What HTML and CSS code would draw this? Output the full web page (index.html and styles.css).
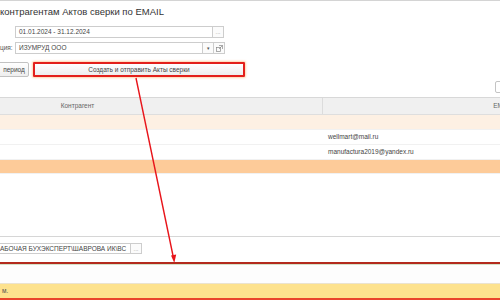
FILE: index.html
```html
<!DOCTYPE html>
<html lang="ru">
<head>
    <meta charset="UTF-8">
    <title>Отправка контрагентам Актов сверки по EMAIL</title>
    <link rel="stylesheet" href="styles.css">
</head>
<body>
    <div class="window">
        <h1 class="title">контрагентам Актов сверки по EMAIL</h1>

        <div class="field-row">
            <span class="label"></span>
            <div class="input date">01.01.2024 - 31.12.2024</div>
            <span class="btn-mini">...</span>
        </div>

        <div class="field-row">
            <span class="label">ция:</span>
            <div class="input org">ИЗУМРУД ООО</div>
            <span class="btn-mini dark">▾</span>
            <span class="btn-mini">
                <svg width="7" height="7" viewBox="0 0 7 7">
                    <rect x="0.5" y="2.5" width="4" height="4" fill="none" stroke="#888" stroke-width="0.7"/>
                    <path d="M3 0.5h3.5v3.5M6.5 0.5L3 4" fill="none" stroke="#888" stroke-width="0.7"/>
                </svg>
            </span>
        </div>

        <div class="actions">
            <button class="btn period">период</button>
            <button class="btn send">Создать и отправить Акты сверки</button>
        </div>

        <div class="table-tools">
            <span class="tool-btn"></span>
        </div>

        <div class="grid">
            <div class="grid-head">
                <div class="col-name">Контрагент</div>
                <div class="col-mail">EMAIL</div>
            </div>
            <div class="grid-row peach">
                <div class="col-name"></div>
                <div class="col-mail"></div>
            </div>
            <div class="grid-row">
                <div class="col-name"></div>
                <div class="col-mail">wellmart@mail.ru</div>
            </div>
            <div class="grid-row">
                <div class="col-name"></div>
                <div class="col-mail">manufactura2019@yandex.ru</div>
            </div>
            <div class="grid-row selected">
                <div class="col-name"></div>
                <div class="col-mail"></div>
            </div>
        </div>

        <div class="footer-field">
            <div class="input user">АБОЧАЯ БУХЭКСПЕРТ\ШАВРОВА ИК\ВС</div>
            <span class="btn-mini">...</span>
        </div>

        <div class="message-box">
            <div class="msg-blank"></div>
            <div class="msg-bar">м.</div>
        </div>
    </div>

    <svg class="arrow" width="500" height="300" viewBox="0 0 500 300">
        <line x1="136" y1="78" x2="173.5" y2="258" stroke="#e8141a" stroke-width="1.4"/>
        <path d="M174.3 263 L171 255.5 L176.2 254.6 Z" fill="#e8141a"/>
    </svg>
</body>
</html>
```

FILE: styles.css
```css
* {
    margin: 0;
    padding: 0;
    box-sizing: border-box;
    font-family: 'Liberation Sans', Arial, sans-serif;
}

body {
    width: 500px;
    height: 300px;
    overflow: hidden;
    background: white;
    color: #4a4a4a;
    position: relative;
}

.window {
    height: 300px;
    display: flex;
    flex-direction: column;
    border-top: 1px solid #d4d4d4;
}

.title {
    height: 25px;
    padding-top: 4px;
    font-size: 9.5px;
    line-height: 14px;
    font-weight: normal;
    color: #333;
}

.field-row {
    display: flex;
    height: 12px;
    margin-bottom: 4px;
}

.label {
    width: 15px;
    font-size: 6.5px;
    line-height: 12px;
    color: #555;
}

.input {
    height: 12px;
    border: 1px solid #cdcdcd;
    background: white;
    font-size: 6.5px;
    line-height: 10px;
    padding-left: 3px;
    color: #444;
}

.date {
    width: 198px;
}

.org {
    width: 188px;
}

.btn-mini {
    width: 11px;
    height: 12px;
    border: 1px solid #cdcdcd;
    border-left: none;
    display: flex;
    align-items: center;
    justify-content: center;
    font-size: 6px;
    color: #999;
    background: #fbfbfb;
}

.btn-mini.dark {
    color: #555;
    font-size: 5px;
}

.actions {
    display: flex;
    margin-top: 4px;
    height: 15px;
}

.btn {
    height: 15px;
    font-size: 6.5px;
    color: #444;
    background: linear-gradient(#ffffff, #eeeeee);
    border: 1px solid #c2c2c2;
    border-radius: 2px;
}

.period {
    width: 38px;
    margin-left: -9px;
    padding-left: 8px;
}

.send {
    width: 212px;
    margin-left: 4px;
    border: 2px solid #e3201b;
    border-radius: 1px;
    box-shadow: 0 0 2px 1px rgba(255, 170, 90, 0.5);
}

.table-tools {
    display: flex;
    justify-content: flex-end;
    height: 13px;
    margin-top: 4px;
}

.tool-btn {
    width: 10px;
    height: 12px;
    margin-right: -5px;
    border: 1px solid #c4c4c4;
    border-radius: 2px;
    background: white;
}

.grid {
    flex: 1;
    margin-top: 3px;
    margin-left: -167px;
    width: 860px;
    border-top: 1px solid #d8d8d8;
}

.grid-head,
.grid-row {
    display: flex;
    font-size: 6.5px;
}

.grid-head {
    height: 17px;
    background: #f0f0f0;
    border-bottom: 1px solid #dedede;
    color: #666;
    line-height: 16px;
}

.grid-head .col-name {
    border-right: 1px solid #dcdcdc;
    text-align: center;
}

.grid-head .col-mail {
    padding-left: 0;
    text-align: center;
}

.col-name {
    width: 490px;
}

.col-mail {
    width: 360px;
    padding-left: 5px;
}

.grid-row {
    height: 15px;
    line-height: 14px;
    border-bottom: 1px solid #f1f1f1;
    color: #444;
}

.grid-row.peach {
    background: #fdf0e3;
}

.grid-row.selected {
    height: 14px;
    background: #fdcb99;
}

.footer-field {
    display: flex;
    height: 26px;
    padding-top: 6px;
    border-top: 1px solid #d6d6d6;
}

.user {
    width: 134px;
    height: 11px;
    margin-left: -3px;
    padding-left: 2px;
    line-height: 9px;
    white-space: nowrap;
}

.footer-field .btn-mini {
    height: 11px;
}

.message-box {
    height: 38px;
    border-top: 2px solid #b32a1d;
    border-bottom: 2px solid #e9442c;
}

.msg-blank {
    height: 20px;
    border-top: 1px solid #d4e2c8;
    background: #fdfdfd;
    border-bottom: 1px solid #ebe3cf;
}

.msg-bar {
    height: 14px;
    background: #fde28e;
    font-size: 6.5px;
    line-height: 14px;
    padding-left: 2px;
    color: #555;
}

.arrow {
    position: absolute;
    top: 0;
    left: 0;
    pointer-events: none;
}
```
